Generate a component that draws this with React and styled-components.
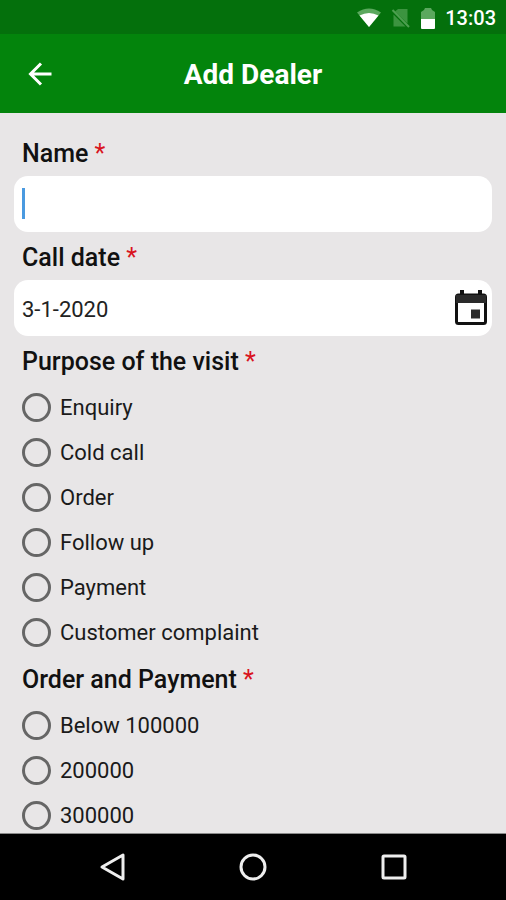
import styled, { createGlobalStyle } from "styled-components";
import { useState } from "react";

const purposes = [
  "Enquiry",
  "Cold call",
  "Order",
  "Follow up",
  "Payment",
  "Customer complaint",
];
const payments = ["Below 100000", "200000", "300000"];

export default function App() {
  const [name, setName] = useState("");
  const [date, setDate] = useState("3-1-2020");
  const [purpose, setPurpose] = useState("");
  const [payment, setPayment] = useState("");

  return (
    <Screen>
      <GlobalStyle />
      <StatusBar>
        <WifiIcon />
        <NoSimIcon />
        <BatteryIcon />
        <Clock>13:03</Clock>
      </StatusBar>
      <Header>
        <IconButton aria-label="Back">
          <BackIcon />
        </IconButton>
        <Title>Add Dealer</Title>
      </Header>
      <Form>
        <Label htmlFor="name">
          Name <Star>*</Star>
        </Label>
        <Field>
          {name === "" && <Caret />}
          <Input
            id="name"
            value={name}
            onChange={(e) => setName(e.target.value)}
          />
        </Field>
        <Label htmlFor="date">
          Call date <Star>*</Star>
        </Label>
        <Field>
          <Input
            id="date"
            value={date}
            onChange={(e) => setDate(e.target.value)}
          />
          <IconButton type="button" aria-label="Pick a date">
            <CalendarIcon />
          </IconButton>
        </Field>
        <RadioGroup
          title="Purpose of the visit"
          name="purpose"
          options={purposes}
          value={purpose}
          onChange={setPurpose}
        />
        <RadioGroup
          title="Order and Payment"
          name="payment"
          options={payments}
          value={payment}
          onChange={setPayment}
        />
      </Form>
      <NavBar>
        <IconButton aria-label="Back">
          <NavIcon>
            <path d="M26 4v24L5 16z" />
          </NavIcon>
        </IconButton>
        <IconButton aria-label="Home">
          <NavIcon>
            <circle cx="16" cy="16" r="12" />
          </NavIcon>
        </IconButton>
        <IconButton aria-label="Recent apps">
          <NavIcon>
            <rect x="6" y="5" width="22" height="22" rx="1" />
          </NavIcon>
        </IconButton>
      </NavBar>
    </Screen>
  );
}

function RadioGroup({ title, name, options, value, onChange }) {
  return (
    <Fieldset>
      <Legend>
        {title} <Star>*</Star>
      </Legend>
      {options.map((option) => (
        <Option key={option}>
          <Radio
            type="radio"
            name={name}
            checked={value === option}
            onChange={() => onChange(option)}
          />
          {option}
        </Option>
      ))}
    </Fieldset>
  );
}

function WifiIcon() {
  return (
    <svg width="24" height="20" viewBox="0 0 24 20">
      <path d="M0 4.5Q12-3.5 24 4.500L12 19z" fill="#5ba85e" />
      <path d="M2.500 7.500Q12 2.500 21.500 7.500L12 19z" fill="#fff" />
    </svg>
  );
}

function NoSimIcon() {
  return (
    <svg width="20" height="20" viewBox="0 0 20 20">
      <path d="M7 1h9.500v14.500L4 3.500z" fill="#3c9440" />
      <path d="M2.500 6.500L14.500 18.500H2.500z" fill="#3c9440" />
      <path d="M1.500 2L18 19" stroke="#4d9f50" strokeWidth="2" />
    </svg>
  );
}

function BatteryIcon() {
  return (
    <svg width="14" height="21" viewBox="0 0 14 21">
      <path d="M0 11V4L3 2L4 0h6L11 2L14 4V11z" fill="#5ba85e" />
      <path d="M0 11h14v9q0 1-1 1H1q-1 0-1-1z" fill="#fff" />
    </svg>
  );
}

function BackIcon() {
  return (
    <svg width="24" height="24" viewBox="0 0 24 24" fill="none">
      <path
        d="M23.500 12H3M13 1.500L2.500 12L13 22.500"
        stroke="#fff"
        strokeWidth="3"
      />
    </svg>
  );
}

function CalendarIcon() {
  return (
    <svg width="34" height="36" viewBox="0 0 34 36">
      <path d="M6 0h4v4H6zM24 0h4v4h-4z" fill="#111" />
      <rect
        x="2.500"
        y="5"
        width="29"
        height="28.500"
        rx="2"
        fill="#fff"
        stroke="#111"
        strokeWidth="3"
      />
      <path d="M2 5h30v8H2z" fill="#2a2a2a" />
      <path d="M17 19.500h9V28.500h-9z" fill="#2a2a2a" />
    </svg>
  );
}

const GlobalStyle = createGlobalStyle`
  * {
    box-sizing: border-box;
  }
  body {
    margin: 0;
    font-family: Roboto, "Liberation Sans", sans-serif;
    color: #111;
  }
`;

const Screen = styled.div`
  display: flex;
  flex-direction: column;
  height: 100vh;
  background-color: #e8e6e7;
`;

const StatusBar = styled.div`
  display: flex;
  flex-shrink: 0;
  align-items: center;
  justify-content: flex-end;
  gap: 10px;
  height: 34px;
  padding: 2px 10px 0;
  background-color: #04700c;
`;

const Clock = styled.span`
  color: #fff;
  font-size: 20px;
  font-weight: 500;
  line-height: 24px;
`;

const Header = styled.header`
  display: grid;
  grid-template-columns: 48px 1fr 48px;
  flex-shrink: 0;
  align-items: center;
  height: 79px;
  padding: 0 16px;
  background-color: #03840c;
`;

const Title = styled.h1`
  margin: 0;
  padding-top: 2px;
  color: #fff;
  font-size: 28px;
  font-weight: 700;
  line-height: 32px;
  text-align: center;
`;

const IconButton = styled.button`
  display: flex;
  align-items: center;
  justify-content: center;
  padding: 0;
  border: none;
  background: none;
  cursor: pointer;
`;

const Form = styled.form`
  flex: 1;
  min-height: 0;
  overflow: hidden;
  padding: 15px 14px 0;
  border-bottom: 1px solid #8a8a8a;
`;

const Label = styled.label`
  display: block;
  height: 48px;
  padding: 0 8px;
  font-size: 25px;
  font-weight: 500;
  line-height: 52px;
`;

const Star = styled.span`
  color: #d9141e;
  font-weight: 400;
`;

const Field = styled.div`
  position: relative;
  display: flex;
  align-items: center;
  height: 56px;
  padding: 0 4px 0 8px;
  border-radius: 14px;
  background-color: #fff;
`;

const Caret = styled.span`
  position: absolute;
  left: 8px;
  top: 12px;
  width: 3px;
  height: 31px;
  background-color: #4a9ae0;
`;

const Input = styled.input`
  flex: 1;
  min-width: 0;
  height: 100%;
  padding: 2px 0 0;
  border: none;
  outline: none;
  background-color: transparent;
  color: #222;
  font-family: inherit;
  font-size: 22px;
`;

const Fieldset = styled.fieldset`
  min-width: 0;
  margin: 0;
  padding: 0 8px;
  border: none;
`;

const Legend = styled.legend`
  height: 48px;
  padding: 0;
  font-size: 25px;
  font-weight: 500;
  line-height: 52px;
`;

const Option = styled.label`
  display: flex;
  align-items: center;
  gap: 9px;
  height: 45px;
  padding-top: 2px;
  color: #1a1a1a;
  font-size: 22px;
`;

const Radio = styled.input`
  appearance: none;
  flex-shrink: 0;
  width: 29px;
  height: 29px;
  margin: 0;
  border: 3px solid #666;
  border-radius: 50%;

  &:checked {
    background: radial-gradient(#666 50%, transparent 54%);
  }
`;

const NavBar = styled.nav`
  display: flex;
  flex-shrink: 0;
  align-items: center;
  justify-content: center;
  gap: 108px;
  height: 66px;
  background-color: #000;
`;

const NavIcon = styled.svg.attrs({ viewBox: "0 0 32 32" })`
  width: 32px;
  height: 32px;
  fill: none;
  stroke: #eee;
  stroke-width: 3px;
  stroke-linejoin: round;
`;
